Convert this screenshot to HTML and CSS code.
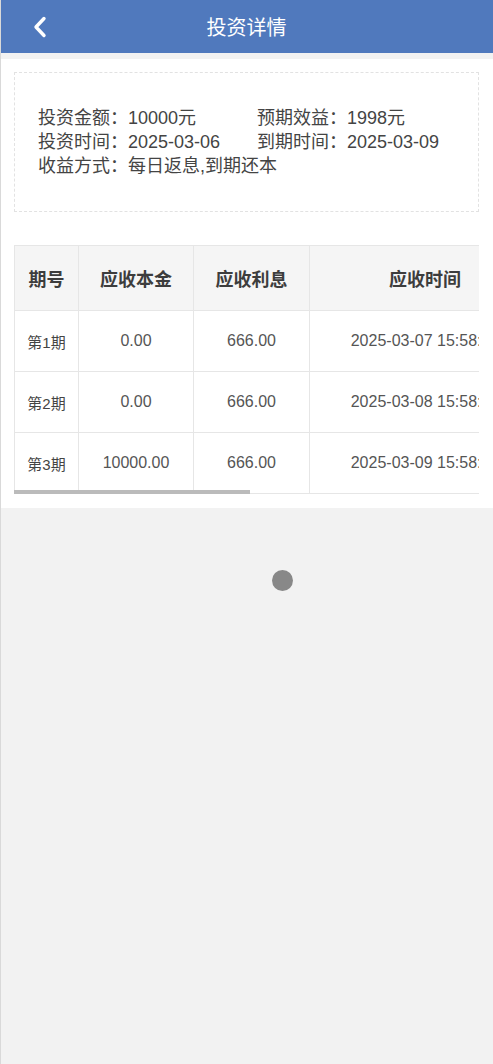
FILE: index.html
```html
<!DOCTYPE html>
<html>
<head>
    <meta charset="utf-8">
    <title>投资详情</title>
    <link rel="stylesheet" href="styles.css">
</head>
<body>
    <div class="page">
        <div class="topbar">
            <a class="back" href="#">
                <svg width="14" height="22" viewBox="0 0 14 22">
                    <polyline points="11,2.5 3,11 11,19.5" fill="none" stroke="#fff" stroke-width="3.4" stroke-linecap="round" stroke-linejoin="round"/>
                </svg>
            </a>
            <h1 class="title">投资详情</h1>
            <span></span>
        </div>

        <div class="content">
            <div class="info">
                <div>投资金额：10000元</div>
                <div>预期效益：1998元</div>
                <div>投资时间：2025-03-06</div>
                <div>到期时间：2025-03-09</div>
                <div class="full">收益方式：每日返息,到期还本</div>
            </div>

            <div class="table-wrap">
                <table class="plan">
                    <thead>
                        <tr>
                            <th class="c-no">期号</th>
                            <th class="c-money">应收本金</th>
                            <th class="c-money2">应收利息</th>
                            <th class="c-time">应收时间</th>
                            <th>状态</th>
                        </tr>
                    </thead>
                    <tbody>
                        <tr>
                            <td class="c-no">第1期</td>
                            <td>0.00</td>
                            <td>666.00</td>
                            <td>2025-03-07 15:58:21</td>
                            <td>已返还</td>
                        </tr>
                        <tr>
                            <td class="c-no">第2期</td>
                            <td>0.00</td>
                            <td>666.00</td>
                            <td>2025-03-08 15:58:21</td>
                            <td>已返还</td>
                        </tr>
                        <tr>
                            <td class="c-no">第3期</td>
                            <td>10000.00</td>
                            <td>666.00</td>
                            <td>2025-03-09 15:58:21</td>
                            <td>已返还</td>
                        </tr>
                    </tbody>
                </table>
            </div>
            <div class="scroll-thumb"></div>
        </div>
    </div>

    <div class="loading"></div>
</body>
</html>
```

FILE: styles.css
```css
body {
    margin: 0;
    background: #f2f2f2;
    font-family: "Liberation Sans", "Noto Sans CJK SC", sans-serif;
    color: #444;
}

.page {
    min-height: 100vh;
    border-left: 1px solid #d9d9d9;
}

/* top bar */
.topbar {
    height: 53px;
    background: #5079bd;
    display: grid;
    grid-template-columns: 1fr auto 1fr;
    align-items: center;
}

.back {
    display: flex;
    padding-left: 32px;
    padding-top: 1px;
}

.title {
    margin: 0;
    font-size: 20px;
    font-weight: normal;
    color: #fff;
    padding-right: 1px;
}

/* white panel */
.content {
    margin-top: 6px;
    background: #fff;
    padding: 13px 14px 14px 13px;
}

.info {
    border: 1px dashed #e2e2e2;
    padding: 33px 23px;
    display: grid;
    grid-template-columns: 219px 1fr;
    font-size: 18px;
    line-height: 24px;
    color: #444;
}

.info .full {
    grid-column: 1 / 3;
}

/* plan table */
.table-wrap {
    margin-top: 33px;
    overflow-x: auto;
}

.table-wrap::-webkit-scrollbar {
    display: none;
}

/* the scrollbar is hidden in the shot, so draw its thumb */
.scroll-thumb {
    position: relative;
    width: 236px;
    height: 4px;
    margin-top: -4px;
    background: #bbb;
}

.plan {
    width: 920px;
    border-collapse: collapse;
    table-layout: fixed;
}

.plan th,
.plan td {
    border: 1px solid #e6e6e6;
    text-align: center;
    padding: 0;
    white-space: nowrap;
}

.plan th {
    height: 64px;
    background: #f5f5f5;
    font-size: 18px;
    font-weight: bold;
    color: #3d3d3d;
}

.plan td {
    height: 60px;
    font-size: 16px;
    color: #555;
}

.plan td.c-no {
    font-size: 15px;
    color: #444;
}

.c-no { width: 63px; }
.c-money { width: 114px; }
.c-money2 { width: 115px; }
.c-time { width: 230px; }

/* spinner over the page */
.loading {
    position: absolute;
    left: 272px;
    top: 570px;
    width: 21px;
    height: 21px;
    border-radius: 50%;
    background: #888;
}
```
